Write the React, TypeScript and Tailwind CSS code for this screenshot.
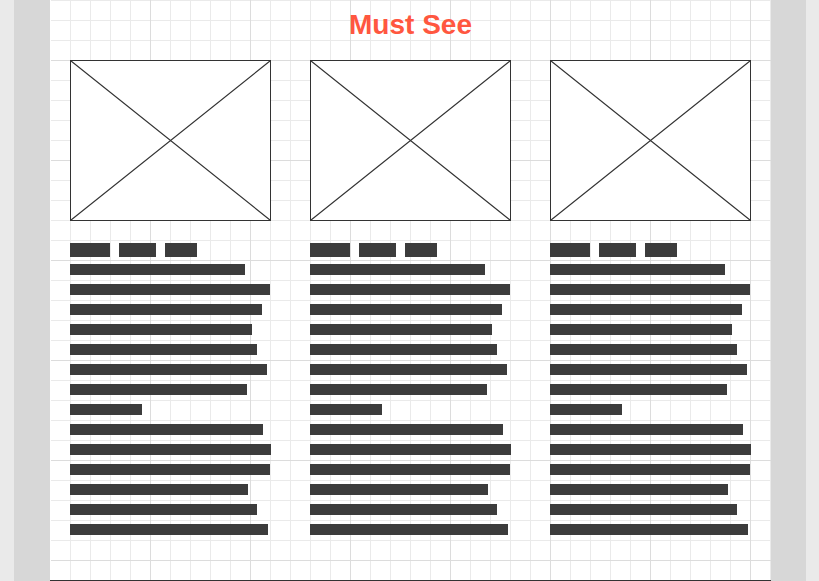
const WORDS: number[] = [40, 37, 32];
const LINES: number[] = [175, 200, 192, 182, 187, 197, 177, 72, 193, 201, 200, 178, 187, 198];
const CARDS: string[] = ["first", "second", "third"];

// Crossed box that stands in for a picture
function ImagePlaceholder() {
  return (
    <svg
      className="block h-[161px] w-full border border-[#333333] bg-white"
      viewBox="0 0 199 159"
      preserveAspectRatio="none"
      role="img"
      aria-label="Image placeholder"
    >
      <path d="M0 0L199 159M199 0L0 159" fill="none" stroke="#333333" strokeWidth="1.25" />
    </svg>
  );
}

// Solid bars that stand in for a heading and its copy
function TextPlaceholder() {
  return (
    <div>
      <div className="flex gap-[9px]">
        {WORDS.map((width, i) => (
          <div key={i} className="h-3.5 bg-[#3c3c3c]" style={{ width }} />
        ))}
      </div>
      <div className="mt-[7px] flex flex-col gap-[9px]">
        {LINES.map((width, i) => (
          <div key={i} className="h-[11px] max-w-full bg-[#3c3c3c]" style={{ width }} />
        ))}
      </div>
    </div>
  );
}

export default function App() {
  return (
    <div className="min-h-screen bg-[#eaeaea] pr-[13px] pl-[14px] font-['Liberation_Sans',Arial,sans-serif]">
      <main className="bg-[#d7d7d7] pr-[35px] pl-9">
        <section className="border-b border-[#333333]">
          <div className="border-l border-white bg-white bg-[linear-gradient(to_right,#dcdcdc_1px,transparent_1px),linear-gradient(to_bottom,#dcdcdc_1px,transparent_1px),linear-gradient(to_right,#eaeaea_1px,transparent_1px),linear-gradient(to_bottom,#eaeaea_1px,transparent_1px)] bg-[length:100px_100px,100px_100px,20px_20px,20px_20px] bg-[position:99px_60px,99px_60px,19px_0px,19px_0px] pt-2 pr-5 pb-[45px] pl-[19px]">
            <h2 className="text-center text-[28px] leading-[34px] font-bold text-[#ff5740]">Must See</h2>
            <div className="mt-[18px] grid grid-cols-3 gap-[39px]">
              {CARDS.map((card) => (
                <article key={card} className="flex min-w-0 flex-col gap-[22px]">
                  <ImagePlaceholder />
                  <TextPlaceholder />
                </article>
              ))}
            </div>
          </div>
        </section>
      </main>
    </div>
  );
}
